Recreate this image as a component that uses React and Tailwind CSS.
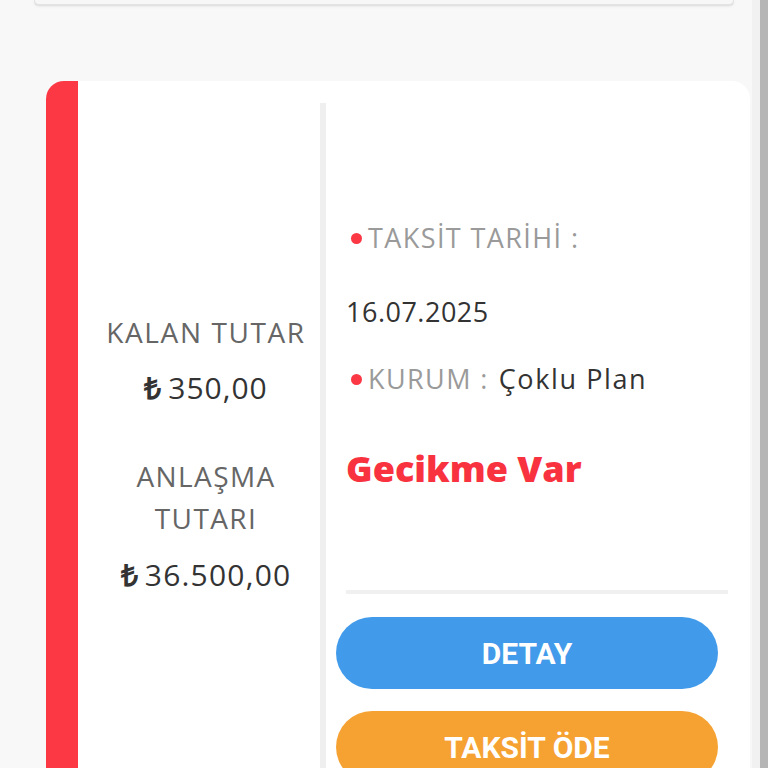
export default function App() {
  const font = { fontFamily: '"Open Sans", "Liberation Sans", sans-serif' };
  const btnFont = { fontFamily: 'Roboto, "Liberation Sans", sans-serif' };

  return (
    <div className="h-[768px] w-[768px] overflow-hidden bg-[#f8f8f8] flex" style={font}>
      <div className="flex-1 flex flex-col">
        {/* previous card, only its bottom edge is on screen */}
        <div className="ml-[34px] w-[700px] h-[5px] shrink-0 bg-[#f7f7f7] border-x border-b border-[#e3e3e3] rounded-b-[6px] shadow-sm" />

        {/* installment card */}
        <div className="ml-[46px] mt-[76px] w-[704px] flex bg-white rounded-t-[18px] overflow-hidden h-[700px] shrink-0">
          <div className="w-[32px] shrink-0 bg-[#fc3845]" />

          {/* left column */}
          <div className="w-[242px] shrink-0 flex flex-col items-center pl-[14px] pt-[229px] text-center">
            <p className="text-[28px] leading-[44px] text-[#666666] tracking-[1.6px]">KALAN TUTAR</p>
            <p className="mt-[12px] text-[30px] leading-[44px] text-[#333333] tracking-[1px]">
              <span className="font-bold mr-[6px]">₺</span>350,00
            </p>
            <p className="mt-[45px] text-[28px] leading-[42px] text-[#666666] tracking-[1.4px] w-[200px]">ANLAŞMA TUTARI</p>
            <p className="mt-[14px] text-[30px] leading-[44px] text-[#333333] tracking-[1.2px]">
              <span className="font-bold mr-[6px]">₺</span>36.500,00
            </p>
          </div>

          {/* divider */}
          <div className="w-[6px] shrink-0 mt-[22px] bg-[#efefef]" />

          {/* right column */}
          <div className="flex-1 pl-[20px] pr-[22px] pt-[135px] flex flex-col">
            <p className="shrink-0 text-[27px] leading-[44px] text-[#9a9a9a] tracking-[1.4px] flex items-center">
              <span className="inline-block w-[11px] h-[11px] rounded-full bg-[#fc3845] ml-[5px] mr-[6px]" />
              TAKSİT TARİHİ :
            </p>
            <p className="shrink-0 mt-[30px] text-[27px] leading-[44px] text-[#333333] tracking-[0.5px]">16.07.2025</p>
            <p className="shrink-0 mt-[23px] text-[27px] leading-[44px] text-[#9a9a9a] tracking-[1.4px] flex items-center">
              <span className="inline-block w-[11px] h-[11px] rounded-full bg-[#fc3845] ml-[5px] mr-[6px]" />
              KURUM :<span className="ml-[10px] text-[#333333] tracking-[1.6px]">Çoklu Plan</span>
            </p>
            <p className="shrink-0 mt-[46px] text-[36px] leading-[44px] font-extrabold text-[#f8333f]">
              Gecikme Var
            </p>
            <div className="shrink-0 mt-[99px] h-[4px] bg-[#f0f0f0]" />
            <button
              className="shrink-0 mt-[23px] -ml-[10px] w-[382px] h-[72px] rounded-full bg-[#419bea] text-white text-[30px] font-bold"
              style={btnFont}
            >
              DETAY
            </button>
            <button
              className="shrink-0 mt-[22px] -ml-[10px] w-[382px] h-[72px] rounded-full bg-[#f6a233] text-white text-[30px] font-bold"
              style={btnFont}
            >
              TAKSİT ÖDE
            </button>
          </div>
        </div>
      </div>

      {/* scrollbar */}
      <div className="w-[8px] bg-[#f1f1f1]" />
      <div className="w-[8px] bg-[#b5b5b5]" />
    </div>
  );
}
